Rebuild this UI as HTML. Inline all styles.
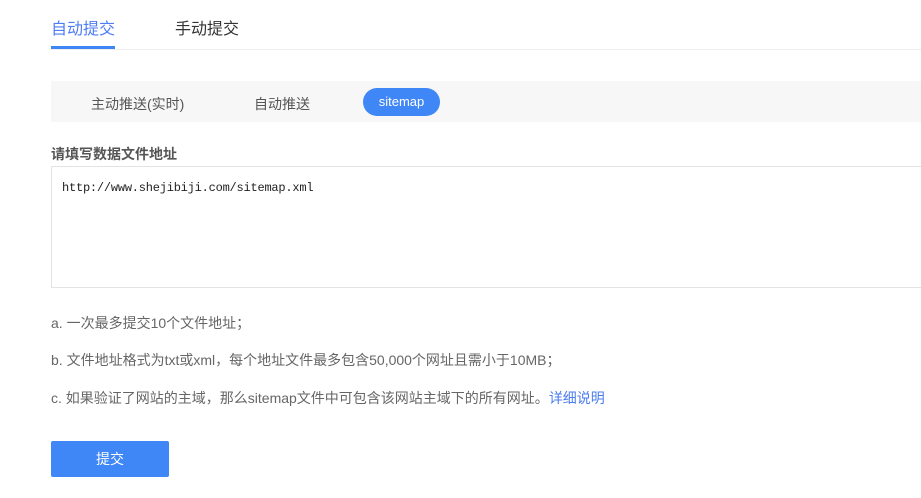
<!DOCTYPE html>
<html><head><meta charset="utf-8"><style>
*{margin:0;padding:0;box-sizing:border-box}
body{width:921px;height:498px;background:#fff;font-family:"Liberation Sans","Noto Sans CJK SC",sans-serif;color:#333;position:relative;overflow:hidden}
.a{position:absolute;white-space:nowrap}
</style></head><body>
<div class="a" style="left:51px;top:15px;font-size:16px;color:#4d7cf5">自动提交</div>
<div class="a" style="left:175px;top:15px;font-size:16px;color:#333">手动提交</div>
<div class="a" style="left:51px;top:46px;width:64px;height:3px;background:#3e86f5"></div>
<div class="a" style="left:51px;top:49px;width:870px;height:1px;background:#eee"></div>
<div class="a" style="left:51px;top:81px;width:870px;height:41px;background:#f7f7f7"></div>
<div class="a" style="left:91px;top:94px;font-size:14px;color:#555">主动推送(实时)</div>
<div class="a" style="left:254px;top:94px;font-size:14px;color:#555">自动推送</div>
<div class="a" style="left:363px;top:88px;width:77px;height:28px;border-radius:14px;background:#3f86f6;color:#fff;font-size:13px;text-align:center;line-height:28px">sitemap</div>
<div class="a" style="left:51px;top:144px;font-size:14px;font-weight:bold;color:#555">请填写数据文件地址</div>
<div class="a" style="left:51px;top:166px;width:875px;height:122px;border:1px solid #e3e3e3"></div>
<div class="a" style="left:62px;top:181px;font-family:'Liberation Mono',monospace;font-size:12px;letter-spacing:-0.22px;color:#222">http://www.shejibiji.com/sitemap.xml</div>
<div class="a" style="left:51px;top:313px;font-size:14px;color:#666">a. 一次最多提交10个文件地址；</div>
<div class="a" style="left:51px;top:350px;font-size:14px;color:#666">b. 文件地址格式为txt或xml，每个地址文件最多包含50,000个网址且需小于10MB；</div>
<div class="a" style="left:51px;top:388px;font-size:14px;color:#666">c. 如果验证了网站的主域，那么sitemap文件中可包含该网站主域下的所有网址。<span style="color:#4a7cf0">详细说明</span></div>
<div class="a" style="left:51px;top:441px;width:118px;height:36px;border-radius:2px;background:#3f86f6;color:#fff;font-size:14px;text-align:center;line-height:36px">提交</div>
</body></html>
